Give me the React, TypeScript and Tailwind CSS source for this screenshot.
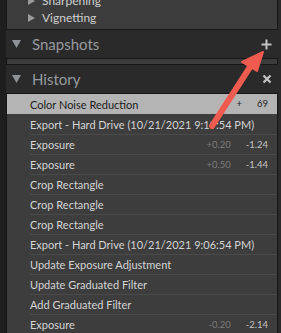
import React from "react"

type Row = { label: string; before?: string; after?: string; active?: boolean }

const rows: Row[] = [
  { label: "Color Noise Reduction", before: "+", after: "69", active: true },
  { label: "Export - Hard Drive (10/21/2021 9:19:54 PM)" },
  { label: "Exposure", before: "+0.20", after: "-1.24" },
  { label: "Exposure", before: "+0.50", after: "-1.44" },
  { label: "Crop Rectangle" },
  { label: "Crop Rectangle" },
  { label: "Crop Rectangle" },
  { label: "Export - Hard Drive (10/21/2021 9:06:54 PM)" },
  { label: "Update Exposure Adjustment" },
  { label: "Update Graduated Filter" },
  { label: "Add Graduated Filter" },
  { label: "Exposure", before: "-0.20", after: "-2.14" },
]

const font = { fontFamily: 'Lato, "Noto Sans", sans-serif' }

function Triangle({ down }: { down?: boolean }) {
  return down ? (
    <svg width="9" height="8" viewBox="0 0 9 8" className="shrink-0">
      <path d="M0 0H9L4.5 8Z" fill="#8f9296" />
    </svg>
  ) : (
    <svg width="7" height="8" viewBox="0 0 7 8" className="shrink-0">
      <path d="M0 0L7 4L0 8Z" fill="#9a9a9a" />
    </svg>
  )
}

function Header({ title, icon }: { title: string; icon: React.ReactNode }) {
  return (
    <div className="flex h-[28px] items-center pl-[6px] pr-[6px]">
      <Triangle down />
      <span className="ml-[11px] text-[15px] leading-none text-[#979a9e]">{title}</span>
      <span className="ml-auto">{icon}</span>
    </div>
  )
}

export default function App() {
  return (
    <div className="relative flex h-[333px] w-[281px] overflow-hidden bg-[#1e1e1e]" style={font}>
      <div className="ml-[6px] flex min-w-0 flex-1 flex-col bg-[#2a2a2a] pr-[3px]">
        {/* develop panel (cut off) */}
        <div className="-mt-[12px] border border-[#181818] bg-[#3c3c3c] pb-[3px] pt-[3px]">
          {["Sharpening", "Vignetting"].map((t) => (
            <div key={t} className="flex h-[17px] items-center pl-[21px]">
              <Triangle />
              <span className="ml-[7px] text-[12px] leading-none text-[#cfcfcf]">{t}</span>
            </div>
          ))}
        </div>

        <Header
          title="Snapshots"
          icon={
            <svg width="11" height="11" viewBox="0 0 11 11">
              <path d="M5.5 0.5V10.5M0.5 5.5H10.5" stroke="#c4c4c4" strokeWidth="2" />
            </svg>
          }
        />
        <div className="h-[7px] border border-[#161616] bg-[#3b3b3b]" />

        <Header
          title="History"
          icon={
            <svg width="10" height="10" viewBox="0 0 10 10">
              <path d="M1.5 1.5L8.5 8.5M8.5 1.5L1.5 8.5" stroke="#c4c4c4" strokeWidth="2.2" />
            </svg>
          }
        />
        <div className="flex-1 overflow-hidden border-x border-t border-[#161616] bg-[#3d3d3d]">
          {rows.map((r, i) => (
            <div
              key={i}
              className={`h-[20px] pl-[23px] ${r.active ? "bg-[#b4b4b4] text-[#1c1c1c]" : "text-[#d4d4d4]"}`}
            >
              <div
                className={`flex h-full items-center whitespace-nowrap pr-[9px] ${
                  i > 1 ? "border-t border-[#4a4a4a]" : ""
                }`}
              >
                <span className="text-[11px] leading-none">{r.label}</span>
                {r.after && (
                  <span className="ml-auto flex items-center text-[9.5px] leading-none">
                    <span className={r.active ? "text-[#1c1c1c]" : "text-[#7c7c7c]"}>{r.before}</span>
                    <span className={`ml-[15px] ${r.active ? "text-[#1c1c1c]" : "text-[#c4c4c4]"}`}>
                      {r.after}
                    </span>
                  </span>
                )}
              </div>
            </div>
          ))}
        </div>
      </div>

      {/* callout arrow */}
      <svg className="absolute left-0 top-0" width="281" height="333" viewBox="0 0 281 333">
        <path d="M212 126L252 64" stroke="#f05b50" strokeWidth="6" strokeLinecap="round" />
        <path d="M263 52L242 62L257 71Z" fill="#f05b50" stroke="#f05b50" strokeWidth="2" strokeLinejoin="round" />
      </svg>
    </div>
  )
}
